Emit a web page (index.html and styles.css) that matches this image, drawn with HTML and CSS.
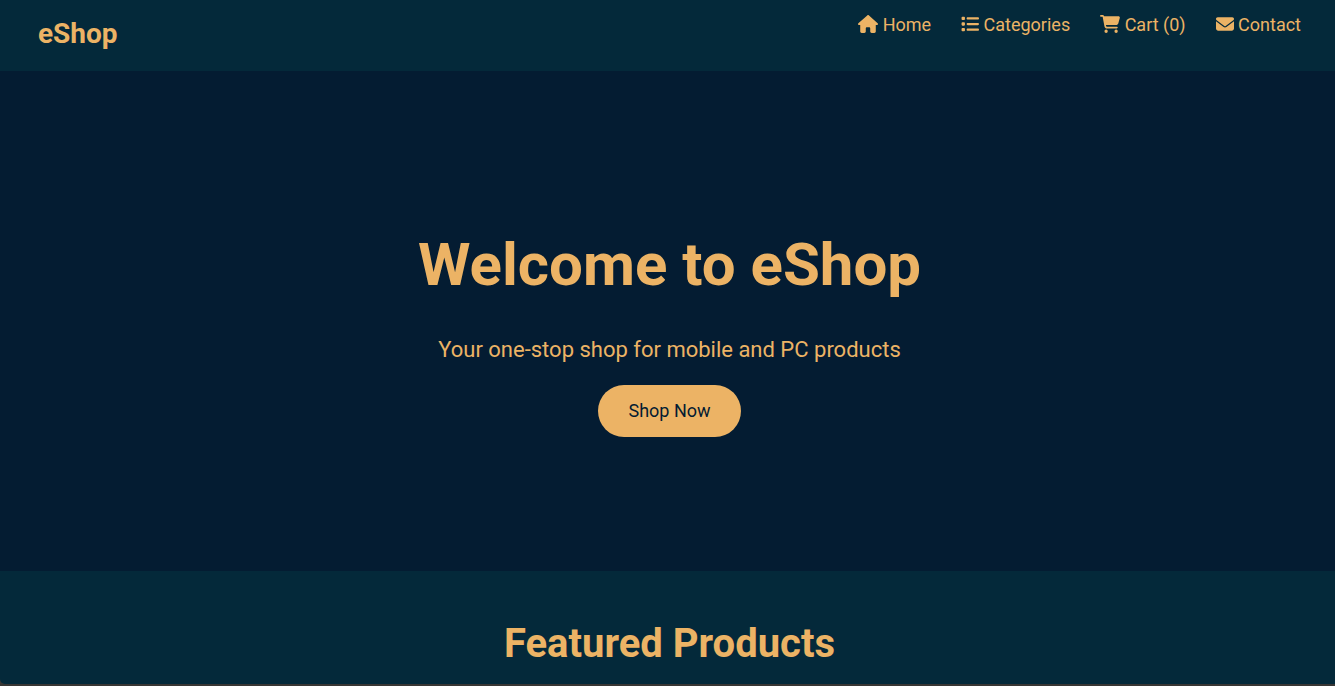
FILE: index.html
```html
<!DOCTYPE html>
<html lang="en">
<head>
<meta charset="utf-8">
<meta name="viewport" content="width=device-width, initial-scale=1">
<title>eShop</title>
<link rel="stylesheet" href="styles.css">
</head>
<body>
<div class="page">
  <header class="header">
    <div class="logo">eShop</div>
    <nav>
      <ul class="nav-list">
        <li><a href="#home"><svg class="icon icon-wide" viewBox="0 0 576 512" aria-hidden="true"><path d="M575.8 255.5c0 18-15 32.1-32 32.1h-32l.7 160.2c0 2.7-.2 5.4-.5 8.1V472c0 22.1-17.9 40-40 40H456c-1.1 0-2.2 0-3.3-.1c-1.4 .1-2.800 .1-4.200 .1H416 392c-22.100 0-40-17.900-40-40V448 384c0-17.700-14.300-32-32-32H256c-17.700 0-32 14.300-32 32v64 24c0 22.100-17.900 40-40 40H160 128.100c-1.500 0-3-.1-4.500-.2c-1.200 .1-2.400 .2-3.600 .2H104c-22.100 0-40-17.900-40-40V360c0-.9 0-1.900 .1-2.800V287.600H32c-18 0-32-14-32-32.100c0-9 3-17 10-24L266.400 8c7-7 15-8 22-8s15 2 21 7L564.800 231.500c8 7 12 15 11 24z"/></svg> Home</a></li>
        <li><a href="#categories"><svg class="icon" viewBox="0 0 512 512" aria-hidden="true"><path d="M40 48C26.700 48 16 58.700 16 72v48c0 13.300 10.700 24 24 24H88c13.300 0 24-10.700 24-24V72c0-13.300-10.700-24-24-24H40zM192 64c-17.700 0-32 14.300-32 32s14.300 32 32 32H480c17.700 0 32-14.300 32-32s-14.300-32-32-32H192zm0 160c-17.700 0-32 14.300-32 32s14.300 32 32 32H480c17.700 0 32-14.300 32-32s-14.300-32-32-32H192zm0 160c-17.700 0-32 14.300-32 32s14.300 32 32 32H480c17.700 0 32-14.300 32-32s-14.300-32-32-32H192zM16 232v48c0 13.300 10.700 24 24 24H88c13.300 0 24-10.700 24-24V232c0-13.300-10.700-24-24-24H40c-13.300 0-24 10.700-24 24zM40 368c-13.300 0-24 10.700-24 24v48c0 13.300 10.700 24 24 24H88c13.300 0 24-10.700 24-24V392c0-13.300-10.700-24-24-24H40z"/></svg> Categories</a></li>
        <li><a href="#cart"><svg class="icon icon-wide" viewBox="0 0 576 512" aria-hidden="true"><path d="M0 24C0 10.700 10.700 0 24 0H69.500c22 0 41.500 12.800 50.600 32h411c26.300 0 45.500 25 38.600 50.400l-41 152.300c-8.500 31.400-37 53.300-69.500 53.300H170.700l5.400 28.500c2.200 11.300 12.100 19.500 23.600 19.500H488c13.300 0 24 10.700 24 24s-10.700 24-24 24H199.700c-34.600 0-64.300-24.600-70.700-58.500L77.400 54.500c-.7-3.800-4-6.500-7.900-6.500H24C10.700 48 0 37.300 0 24zM128 464a48 48 0 1 1 96 0 48 48 0 1 1 -96 0zm336-48a48 48 0 1 1 0 96 48 48 0 1 1 0-96z"/></svg> Cart (0)</a></li>
        <li><a href="#contact"><svg class="icon" viewBox="0 0 512 512" aria-hidden="true"><path d="M48 64C21.500 64 0 85.500 0 112c0 15.100 7.100 29.300 19.200 38.400L236.800 313.600c11.400 8.500 27 8.500 38.400 0L492.800 150.400c12.100-9.100 19.200-23.300 19.200-38.400c0-26.500-21.500-48-48-48H48zM0 176V384c0 35.300 28.700 64 64 64H448c35.300 0 64-28.700 64-64V176L294.400 339.200c-22.800 17.100-54 17.100-76.800 0L0 176z"/></svg> Contact</a></li>
      </ul>
    </nav>
  </header>
  <section class="hero">
    <h1>Welcome to eShop</h1>
    <p>Your one-stop shop for mobile and PC products</p>
    <button class="shop-button" type="button">Shop Now</button>
  </section>
  <section class="featured">
    <h2>Featured Products</h2>
  </section>
</div>
</body>
</html>
```
FILE: styles.css
```css
* {
  box-sizing: border-box;
}

body {
  margin: 0;
  padding-bottom: 2px;
  background: #383634;
  color: #ecb365;
  font-family: Roboto, "Liberation Sans", sans-serif;
}

.page {
  display: flex;
  flex-direction: column;
  height: calc(100vh - 2px);
  overflow: hidden;
  border-bottom-left-radius: 5px;
  background: #04293a;
}

.header {
  display: flex;
  flex-shrink: 0;
  justify-content: space-between;
  align-items: flex-start;
  padding: 14px 34px 18px 38px;
  background: #04293a;
}

.logo {
  font-size: 28px;
  font-weight: 700;
  line-height: 39px;
}

.nav-list {
  display: flex;
  gap: 30px;
  margin: 0;
  padding: 0;
  list-style: none;
}

.nav-list a {
  color: inherit;
  font-size: 18px;
  line-height: 21px;
  text-decoration: none;
}

.icon {
  width: 18px;
  height: 18px;
  fill: currentColor;
  vertical-align: -2px;
}

.icon-wide {
  width: 20px;
}

.hero {
  display: flex;
  flex-shrink: 0;
  flex-direction: column;
  align-items: center;
  justify-content: center;
  min-height: 500px;
  padding: 25px 0 0 4px;
  background: #041c32;
  text-align: center;
}

.hero h1 {
  margin: 0 0 37px;
  font-size: 60px;
  line-height: 70px;
}

.hero p {
  margin: 0 0 22px;
  font-size: 22px;
  line-height: 26px;
}

.shop-button {
  padding: 15px 30px;
  border: 0;
  border-radius: 30px;
  background: #ecb365;
  color: #041c32;
  font-family: inherit;
  font-size: 18px;
  line-height: 22px;
}

.featured {
  flex-grow: 1;
  padding: 49px 0 0 4px;
  text-align: center;
}

.featured h2 {
  margin: 0;
  font-size: 40px;
  line-height: 47px;
}
```
